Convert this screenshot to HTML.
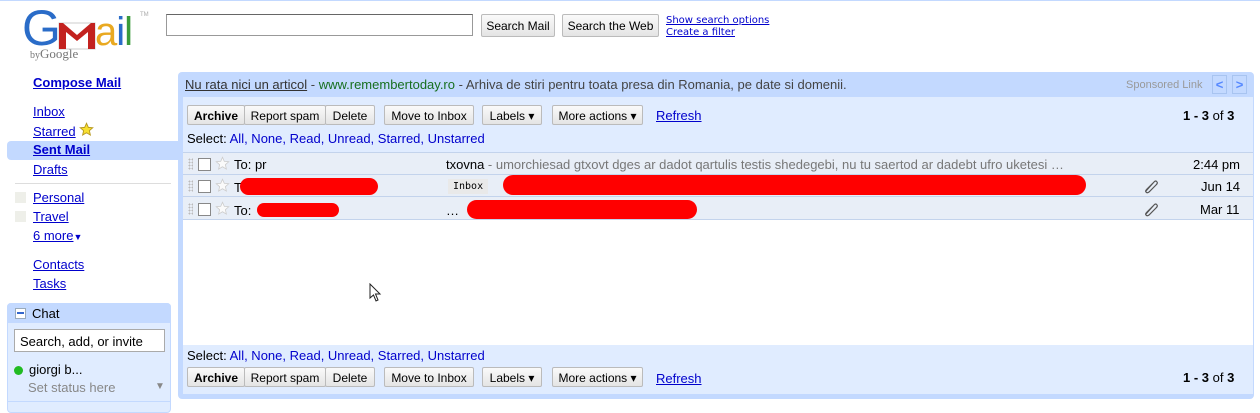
<!DOCTYPE html>
<html><head><meta charset="utf-8"><style>
body{margin:0;width:1260px;height:406px;background:#fff;font-family:"Liberation Sans",Arial,sans-serif;font-size:13px;position:relative;overflow:hidden}
.a{position:absolute}
a,.l{color:#00c;text-decoration:underline}
.btn{position:absolute;height:20px;border:1px solid #bbb;background:linear-gradient(#fafafa,#e4e4e4);font-size:12px;line-height:20px;text-align:center;color:#000;box-sizing:border-box;border-radius:2px}
.sel{color:#000}
.sel span{color:#00c}
.row{position:absolute;left:183px;width:1070px;height:22px;background:#e8eef7;border-bottom:1px solid #c3d3ec;box-sizing:border-box}
.red{position:absolute;background:#f00;border-radius:12px}
.dh{position:absolute;width:5px;height:12px;background-image:radial-gradient(#bbb 0.8px,transparent 1px);background-size:3px 3px}
</style></head><body>
<div class="a" style="left:0;top:0;width:1260px;height:1px;background:#c3d9ff"></div>
<!-- logo -->
<div class="a" style="left:22px;top:0px;font-family:'Liberation Sans',sans-serif;font-size:50px;line-height:56px;color:#2a6cc8;letter-spacing:-3px">G</div>
<svg class="a" style="left:58px;top:22px" width="38" height="28" viewBox="0 0 38 28"><rect x="1" y="1" width="36" height="26" fill="#fff" stroke="#ccc"/><path d="M1 1 L1 27 L8 27 L8 10 L19 19 L30 10 L30 27 L37 27 L37 1 L33 1 L19 13 L5 1Z" fill="#c3221f"/></svg>
<div class="a" style="left:95px;top:10px;font-family:'Liberation Sans',sans-serif;font-size:40px;line-height:44px;letter-spacing:-1px"><span style="color:#e9a921">a</span><span style="color:#2a6cc8">i</span><span style="color:#3a9b3a">l</span></div>
<div class="a" style="left:140px;top:12px;font-size:6px;color:#aaa">TM</div>
<div class="a" style="left:30px;top:46px;font-family:'Liberation Serif',serif;font-size:10px;color:#777">by<span style="font-size:13px">Google</span></div>
<div class="a" style="left:166px;top:14px;width:307px;height:22px;border:1px solid #999;border-top-color:#666;box-sizing:border-box"></div>
<div class="btn" style="left:481px;top:14px;width:74px;height:23px;line-height:22px;font-size:12px">Search Mail</div>
<div class="btn" style="left:562px;top:14px;width:97px;height:23px;line-height:22px;font-size:12px">Search the Web</div>
<div class="a l" style="left:666px;top:15px;font-size:10px;font-family:'DejaVu Sans',sans-serif">Show search options</div>
<div class="a l" style="left:666px;top:27px;font-size:10px;font-family:'DejaVu Sans',sans-serif">Create a filter</div>
<!-- sidebar -->
<div class="a l" style="left:33px;top:75px;font-weight:bold">Compose Mail</div>
<div class="a l" style="left:33px;top:104px">Inbox</div>
<div class="a l" style="left:33px;top:124px">Starred</div>
<svg class="a" style="left:79px;top:122px" width="15" height="15" viewBox="0 0 24 24"><path d="M12 2l2.9 6.6 7.1.6-5.4 4.7 1.6 7-6.2-3.7-6.2 3.7 1.6-7L2 9.2l7.1-.6z" fill="#f8e030" stroke="#b89a20" stroke-width="1.5"/></svg>
<div class="a" style="left:7px;top:141px;width:171px;height:19px;background:#c3d9ff;border-radius:4px 0 0 4px"></div>
<div class="a l" style="left:33px;top:142px;font-weight:bold">Sent Mail</div>
<div class="a l" style="left:33px;top:162px">Drafts</div>
<div class="a" style="left:15px;top:183px;width:156px;height:1px;background:#ddd"></div>
<div class="a" style="left:15px;top:192px;width:11px;height:11px;background:#eeefe9"></div>
<div class="a l" style="left:33px;top:190px">Personal</div>
<div class="a" style="left:15px;top:211px;width:11px;height:11px;background:#eeefe9"></div>
<div class="a l" style="left:33px;top:209px">Travel</div>
<div class="a" style="left:33px;top:228px;color:#00c"><span class="l">6 more</span><span style="font-size:9px">▼</span></div>
<div class="a l" style="left:33px;top:257px">Contacts</div>
<div class="a l" style="left:33px;top:276px">Tasks</div>
<!-- chat -->
<div class="a" style="left:7px;top:303px;width:164px;height:110px;background:#e0ecff;border:1px solid #c3d9ff;border-radius:4px;box-sizing:border-box"></div>
<div class="a" style="left:7px;top:303px;width:164px;height:20px;background:#c3d9ff;border-radius:4px 4px 0 0"></div>
<div class="a" style="left:15px;top:308px;width:9px;height:9px;background:#fff;border:1px solid #9ab"></div>
<div class="a" style="left:17px;top:312px;width:7px;height:2px;background:#36c"></div>
<div class="a" style="left:32px;top:306px">Chat</div>
<div class="a" style="left:14px;top:329px;width:151px;height:23px;background:#fff;border:1px solid #aaa;box-sizing:border-box;padding:4px 5px;font-size:13px">Search, add, or invite</div>
<div class="a" style="left:14px;top:366px;width:9px;height:9px;border-radius:50%;background:#2b2"></div>
<div class="a" style="left:29px;top:362px">giorgi b...</div>
<div class="a" style="left:28px;top:380px;color:#888">Set status here</div>
<div class="a" style="left:155px;top:381px;color:#888;font-size:10px">▼</div>
<div class="a" style="left:7px;top:401px;width:164px;height:1px;background:#c3d9ff"></div>
<!-- main panel -->
<div class="a" style="left:178px;top:72px;width:1076px;height:327px;background:#c3d9ff;border-radius:4px"></div>
<div class="a" style="left:183px;top:97px;width:1070px;height:297px;background:#e0ecff"></div>
<div class="a" style="left:185px;top:77px;color:#444"><span style="text-decoration:underline;color:#333">Nu rata nici un articol</span> - <span style="color:#176f1f">www.remembertoday.ro</span> - Arhiva de stiri pentru toata presa din Romania, pe date si domenii.</div>
<div class="a" style="left:1126px;top:79px;color:#999;font-size:11px">Sponsored Link</div>
<div class="a" style="left:1212px;top:75px;width:15px;height:19px;border:1px solid #a8c4f0;box-sizing:border-box;color:#58f;text-align:center;font-size:13px;line-height:17px;font-weight:bold">&lt;</div>
<div class="a" style="left:1232px;top:75px;width:15px;height:19px;border:1px solid #a8c4f0;box-sizing:border-box;color:#58f;text-align:center;font-size:13px;line-height:17px;font-weight:bold">&gt;</div>
<!-- toolbars -->
<div class="btn" style="left:187px;top:105px;width:58px;font-weight:bold">Archive</div>
<div class="btn" style="left:244px;top:105px;width:82px">Report spam</div>
<div class="btn" style="left:325px;top:105px;width:50px">Delete</div>
<div class="btn" style="left:384px;top:105px;width:90px">Move to Inbox</div>
<div class="btn" style="left:482px;top:105px;width:60px">Labels ▾</div>
<div class="btn" style="left:552px;top:105px;width:91px">More actions ▾</div>
<div class="a l" style="left:656px;top:108px">Refresh</div>
<div class="a" style="left:1183px;top:108px;font-weight:bold">1 - 3 <span style="font-weight:normal">of</span> 3</div>
<div class="a sel" style="left:187px;top:131px">Select: <span>All, None, Read, Unread, Starred, Unstarred</span></div>
<div class="a" style="left:183px;top:152px;width:1070px;height:1px;background:#c3d3ec"></div>
<div class="row" style="top:153px"></div>
<div class="row" style="top:175px"></div>
<div class="row" style="top:197px;height:23px"></div>
<div class="a" style="left:183px;top:220px;width:1070px;height:125px;background:#fff"></div>
<!-- row contents -->
<div class="dh" style="left:188px;top:158px"></div>
<div class="dh" style="left:188px;top:180px"></div>
<div class="dh" style="left:188px;top:203px"></div>
<div class="a" style="left:198px;top:158px;width:11px;height:11px;border:1px solid #888;background:#fff"></div>
<div class="a" style="left:198px;top:180px;width:11px;height:11px;border:1px solid #888;background:#fff"></div>
<div class="a" style="left:198px;top:203px;width:11px;height:11px;border:1px solid #888;background:#fff"></div>
<svg class="a" style="left:215px;top:156px" width="15" height="15" viewBox="0 0 24 24"><path d="M12 2l2.9 6.6 7.1.6-5.4 4.7 1.6 7-6.2-3.7-6.2 3.7 1.6-7L2 9.2l7.1-.6z" fill="#fafafa" stroke="#ccc" stroke-width="1.3"/></svg>
<svg class="a" style="left:215px;top:178px" width="15" height="15" viewBox="0 0 24 24"><path d="M12 2l2.9 6.6 7.1.6-5.4 4.7 1.6 7-6.2-3.7-6.2 3.7 1.6-7L2 9.2l7.1-.6z" fill="#fafafa" stroke="#ccc" stroke-width="1.3"/></svg>
<svg class="a" style="left:215px;top:201px" width="15" height="15" viewBox="0 0 24 24"><path d="M12 2l2.9 6.6 7.1.6-5.4 4.7 1.6 7-6.2-3.7-6.2 3.7 1.6-7L2 9.2l7.1-.6z" fill="#fafafa" stroke="#ccc" stroke-width="1.3"/></svg>
<div class="a" style="left:234px;top:157px">To: pr</div>
<div class="a" style="left:234px;top:180px">To</div>
<div class="a" style="left:234px;top:203px">To:</div>
<div class="a" style="left:446px;top:157px;color:#000">txovna <span style="color:#777">- umorchiesad gtxovt dges ar dadot qartulis testis shedegebi, nu tu saertod ar dadebt ufro uketesi …</span></div>
<div class="a" style="left:448px;top:179px;background:#e9e9e9;font-size:10px;padding:2px 5px;font-family:'DejaVu Sans Mono',monospace">Inbox</div>
<div class="a" style="left:446px;top:203px">…</div>
<div class="red" style="left:240px;top:178px;width:138px;height:17px"></div>
<div class="red" style="left:503px;top:175px;width:583px;height:20px"></div>
<div class="red" style="left:257px;top:203px;width:82px;height:14px"></div>
<div class="red" style="left:467px;top:200px;width:230px;height:19px"></div>
<svg class="a" style="left:1143px;top:178px" width="16" height="16" viewBox="0 0 16 16"><path d="M3 13 L11 4 Q13 2 14 4 Q15 5 13 7 L6 14 Q4 15.5 3 14 Q2 13 4 11 L10 5" fill="none" stroke="#555" stroke-width="1.2"/></svg>
<svg class="a" style="left:1143px;top:201px" width="16" height="16" viewBox="0 0 16 16"><path d="M3 13 L11 4 Q13 2 14 4 Q15 5 13 7 L6 14 Q4 15.5 3 14 Q2 13 4 11 L10 5" fill="none" stroke="#555" stroke-width="1.2"/></svg>
<div class="a" style="left:1193px;top:157px">2:44 pm</div>
<div class="a" style="left:1201px;top:179px">Jun 14</div>
<div class="a" style="left:1200px;top:202px">Mar 11</div>
<svg class="a" style="left:369px;top:283px" width="14" height="20" viewBox="0 0 14 20"><path d="M1 1 L1 15 L4.5 12 L7 18 L9 17 L6.5 11 L11 11 Z" fill="#fff" stroke="#222" stroke-width="1"/></svg>
<!-- bottom -->
<div class="a sel" style="left:187px;top:348px">Select: <span>All, None, Read, Unread, Starred, Unstarred</span></div>
<div class="btn" style="left:187px;top:367px;width:58px;font-weight:bold">Archive</div>
<div class="btn" style="left:244px;top:367px;width:82px">Report spam</div>
<div class="btn" style="left:325px;top:367px;width:50px">Delete</div>
<div class="btn" style="left:384px;top:367px;width:90px">Move to Inbox</div>
<div class="btn" style="left:482px;top:367px;width:60px">Labels ▾</div>
<div class="btn" style="left:552px;top:367px;width:91px">More actions ▾</div>
<div class="a l" style="left:656px;top:371px">Refresh</div>
<div class="a" style="left:1183px;top:370px;font-weight:bold">1 - 3 <span style="font-weight:normal">of</span> 3</div>
</body></html>
